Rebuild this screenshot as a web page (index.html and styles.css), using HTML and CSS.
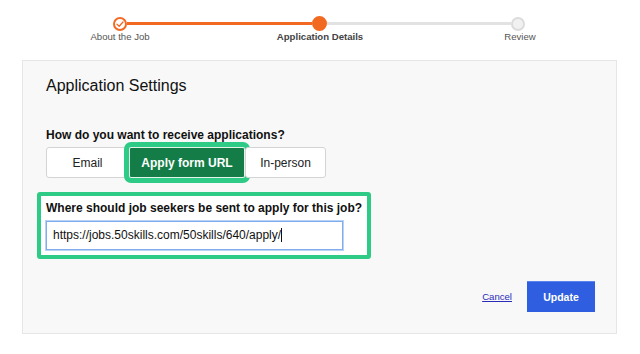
FILE: index.html
```html
<!DOCTYPE html>
<html lang="en">
<head>
  <meta charset="UTF-8" />
  <title>Application Settings</title>
  <link rel="stylesheet" href="styles.css">
</head>
<body>
  <div class="stepper">
    <div class="track">
      <span class="dot done">
        <svg width="10" height="10" viewBox="0 0 10 10"><polyline points="2,5.2 4.2,7.3 8,3" fill="none" stroke="#f26a21" stroke-width="1.3" stroke-linecap="round" stroke-linejoin="round"/></svg>
      </span>
      <span class="bar bar-done"></span>
      <span class="dot current"></span>
      <span class="bar"></span>
      <span class="dot"></span>
    </div>
    <div class="step-labels">
      <span>About the Job</span>
      <span class="active">Application Details</span>
      <span>Review</span>
    </div>
  </div>

  <div class="panel">
    <h2 class="panel-title">Application Settings</h2>

    <div class="field-label">How do you want to receive applications?</div>
    <div class="choice-group">
      <button class="choice choice-email">Email</button>
      <button class="choice choice-url selected">Apply form URL</button>
      <button class="choice choice-person">In-person</button>
    </div>

    <div class="url-box">
      <div class="field-label">Where should job seekers be sent to apply for this job?</div>
      <div class="url-field">https://jobs.50skills.com/50skills/640/apply/<span class="caret"></span></div>
    </div>

    <div class="actions">
      <a href="#" class="cancel">Cancel</a>
      <button class="update">Update</button>
    </div>
  </div>
</body>
</html>
```

FILE: styles.css
```css
* { margin: 0; padding: 0; box-sizing: border-box; }
body {
  background: #fff;
  font-family: 'Liberation Sans', Arial, sans-serif;
  color: #111;
}

/* Stepper */
.stepper { padding-top: 16px; }
.track {
  display: flex;
  align-items: center;
  width: 412px;
  height: 15px;
  margin-left: 113px;
}
.dot {
  width: 14px; height: 14px;
  border-radius: 50%;
  border: 2px solid #dcdcdc;
  background: #f1f1f1;
  display: flex;
  align-items: center;
  justify-content: center;
  flex: none;
}
.dot.done { border-color: #f26a21; background: #fff; }
.dot.current {
  width: 15px; height: 15px;
  border-color: #f26a21;
  background: #f26a21;
}
.bar { flex: 1; height: 3px; background: #e2e2e2; }
.bar-done { background: #f26a21; }
.step-labels {
  display: grid;
  grid-template-columns: repeat(3, 200px);
  margin-left: 20px;
  font-size: 9.6px;
  line-height: 12px;
  color: #555;
  text-align: center;
}
.step-labels .active { font-weight: bold; color: #444; }

/* Panel */
.panel {
  margin: 17px 23px 0 22px;
  background: #f8f8f8;
  border: 1px solid #e6e6e6;
  padding: 15px 21px 21px 23px;
}
.panel-title {
  font-size: 16px;
  font-weight: normal;
  line-height: 20px;
  color: #111;
}
.field-label {
  font-size: 12px;
  font-weight: bold;
  line-height: 15px;
  color: #111;
  white-space: nowrap;
}
.panel-title + .field-label { margin-top: 32px; }

.choice-group {
  display: flex;
  margin-top: 4px;
  height: 31px;
}
.choice {
  font-family: inherit;
  font-size: 12px;
  color: #222;
  background: #fff;
  border: 1px solid #d4d4d4;
  border-radius: 3px;
  cursor: pointer;
}
.choice-email { width: 83px; }
.choice-url { width: 116px; }
.choice-person { width: 81px; }
.choice.selected {
  background: #147d47;
  color: #fff;
  font-weight: bold;
  border: 1px solid #e4f3ea;
  outline: 5px solid #2ecb86;
  border-radius: 2px;
}

.url-box {
  margin: 14px 0 0 -9px;
  width: 334px;
  border: 4px solid #2ecb86;
  border-radius: 3px;
  background: #fff;
  padding: 5px;
}
.url-field {
  margin-top: 5px;
  width: 297px;
  height: 29px;
  border: 1px solid #80abec;
  box-shadow: 0 0 0 1px #b9d3f7;
  background: #fff;
  font-size: 12px;
  line-height: 27px;
  padding-left: 6px;
  color: #111;
}
.caret {
  display: inline-block;
  width: 1px;
  height: 14px;
  background: #111;
  vertical-align: -3px;
}

.actions {
  display: flex;
  justify-content: flex-end;
  align-items: center;
  gap: 15px;
  margin-top: 22px;
}
.cancel {
  font-size: 9.6px;
  color: #2b2bb8;
  text-decoration: underline;
}
.update {
  width: 68px;
  height: 31px;
  border: none;
  border-top: 1px solid #5b84ec;
  background: #2f5fe0;
  color: #fff;
  font-family: inherit;
  font-weight: bold;
  font-size: 10.5px;
  cursor: pointer;
}
```
